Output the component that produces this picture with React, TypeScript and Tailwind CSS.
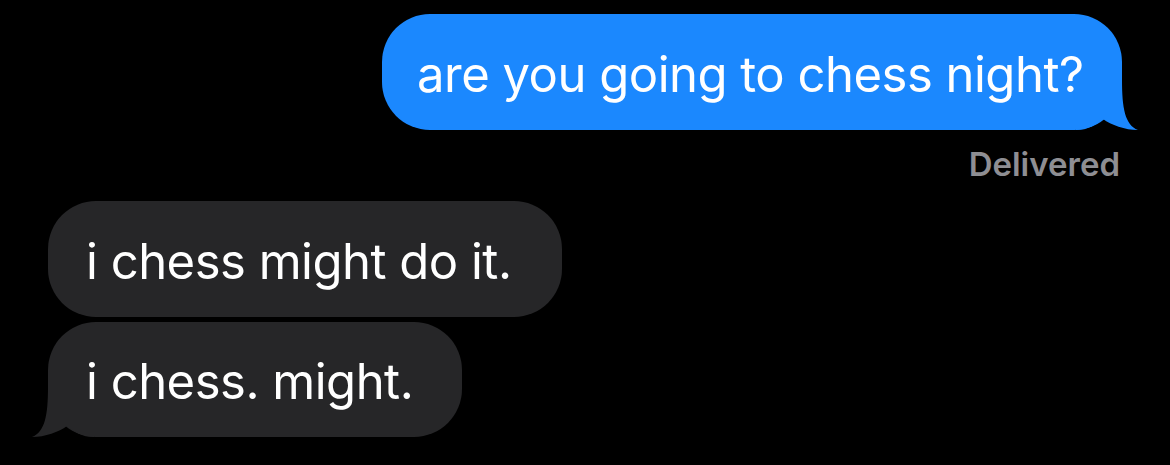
import React from "react";

const font = { fontFamily: "Inter, 'Noto Sans', sans-serif" };

function TailRight() {
  return (
    <svg
      className="absolute right-[-18px] bottom-0"
      width="64"
      height="50"
      viewBox="0 0 64 50"
    >
      <path
        d="M0 0 L46 0 C46 28 49 45 62 50 C49 50 35 45 27 39 C20 45 12 50 0 50 Z"
        fill="#1b88fe"
      />
    </svg>
  );
}

function TailLeft() {
  return (
    <svg
      className="absolute left-[-18px] bottom-0"
      width="64"
      height="50"
      viewBox="0 0 64 50"
    >
      <g transform="translate(64 0) scale(-1 1)">
        <path
          d="M0 0 L46 0 C46 28 49 45 62 50 C49 50 35 45 27 39 C20 45 12 50 0 50 Z"
          fill="#262628"
        />
      </g>
    </svg>
  );
}

export default function App() {
  return (
    <div
      className="w-[1170px] h-[465px] bg-black flex flex-col px-[48px] pt-[14px] overflow-hidden"
      style={font}
    >
      <div className="flex justify-end">
        <div className="relative w-[740px] h-[116px] rounded-[48px] bg-[#1b88fe] flex items-center pl-[35px] pt-[4px]">
          <TailRight />
          <span className="relative text-white text-[49px] tracking-[-0.5px] leading-none">
            are you going to chess night?
          </span>
        </div>
      </div>
      <div className="flex justify-end pr-[2px] mt-[18px]">
        <span className="text-[#8e8e93] text-[33px] font-semibold leading-none">
          Delivered
        </span>
      </div>
      <div className="flex flex-col items-start mt-[20px] gap-[5px]">
        <div className="relative w-[514px] h-[116px] rounded-[48px] bg-[#262628] flex items-center pl-[38px] pt-[4px]">
          <span className="relative text-white text-[49px] tracking-[-0.5px] leading-none">
            i chess might do it.
          </span>
        </div>
        <div className="relative w-[414px] h-[115px] rounded-[48px] bg-[#262628] flex items-center pl-[38px] pt-[4px]">
          <TailLeft />
          <span className="relative text-white text-[49px] tracking-[-0.5px] leading-none">
            i chess. might.
          </span>
        </div>
      </div>
    </div>
  );
}
